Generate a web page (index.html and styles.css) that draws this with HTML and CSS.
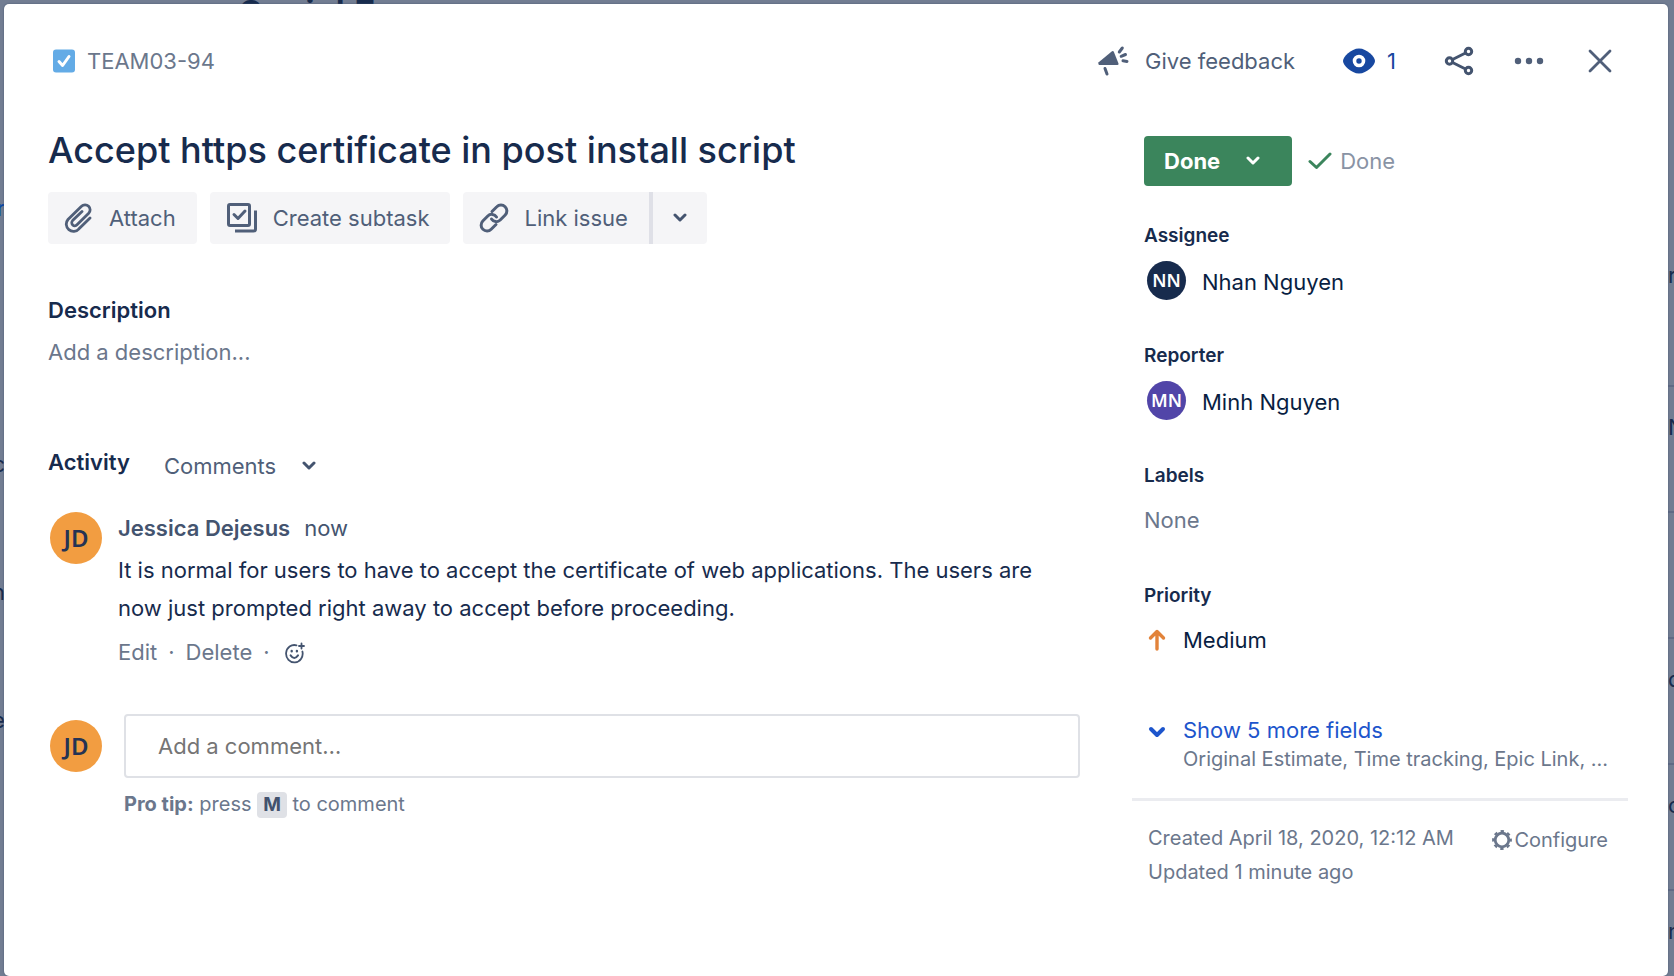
FILE: index.html
```html
<!DOCTYPE html>
<html lang="en">
<head>
<meta charset="utf-8">
<title>TEAM03-94</title>
<link rel="stylesheet" href="styles.css">
</head>
<body>
<div class="board" aria-hidden="true">
  <span class="board-title">Social F</span>
  <div class="board-left"><span class="board-link">r</span><span></span><span>c</span><span>n</span><span>e</span></div>
  <div class="board-right"><span>r-</span><span>N</span><span></span><span>d</span><span>or</span><span>n</span></div>
</div>
<main class="modal" role="dialog" aria-labelledby="issue-title">
  <header class="topbar">
    <a class="issue-key" href="#">
      <svg width="22" height="24" viewBox="0 0 22 24"><rect y="0.5" width="22" height="23" rx="3" fill="#63abe6"/><path d="M6 12.5l3.600 4 6.400-9" fill="none" stroke="#fff" stroke-width="3" stroke-linecap="round" stroke-linejoin="round"/></svg>
      TEAM03-94
    </a>
    <div class="top-actions">
      <button class="top-btn feedback" type="button">
        <svg width="32" height="32" viewBox="0 0 32 32"><path d="M1.700 17.300L15 6.200q1.200-.8 1.800.5l4.700 11.800q.3 1.500-1.200 1.500H2.200q-1.600-.4-.5-2.700z" fill="#505f79"/><path d="M8 23.500l2 5.500M22.300 7l3-4M24.200 11.300l4.300-1.800M26 15.800l4 .6" fill="none" stroke="#505f79" stroke-width="3" stroke-linecap="round"/></svg>
        Give feedback
      </button>
      <button class="top-btn watch" type="button">
        <svg width="32" height="26" viewBox="0 0 32 26"><path d="M16 0.500C24 .5 32 9 32 13S24 25.500 16 25.500 0 17 0 13 8 .5 16 .5z" fill="#1848a0"/><circle cx="16" cy="13" r="4.500" fill="none" stroke="#fff" stroke-width="3.600"/></svg>
        1
      </button>
      <button class="top-btn" type="button" aria-label="Share">
        <svg width="30" height="30" viewBox="0 0 30 30" fill="none" stroke="#44546f" stroke-width="3"><circle cx="5.500" cy="15" r="3.200"/><circle cx="24.500" cy="5.500" r="3.200"/><circle cx="24.500" cy="24.500" r="3.200"/><path d="M8.500 13.500l13-6.500M8.500 16.500l13 6.500"/></svg>
      </button>
      <button class="top-btn" type="button" aria-label="Actions">
        <svg width="30" height="8" viewBox="0 0 30 8" fill="#505f79"><circle cx="4" cy="4" r="3.200"/><circle cx="15" cy="4" r="3.200"/><circle cx="26" cy="4" r="3.200"/></svg>
      </button>
      <button class="top-btn close" type="button" aria-label="Close">
        <svg width="26" height="26" viewBox="0 0 26 26" fill="none" stroke="#505f79" stroke-width="2.800" stroke-linecap="round"><path d="M3 3l20 20M23 3L3 23"/></svg>
      </button>
    </div>
  </header>

  <div class="columns">
    <section class="content">
      <h1 class="title" id="issue-title">Accept https certificate in post install script</h1>
      <div class="tools">
        <button class="tool" type="button">
          <svg width="30" height="30" viewBox="0 0 30 30" fill="none" stroke="#505f79" stroke-width="2.800" stroke-linecap="round"><path d="M26 15L15 25.800A7 7 0 0 1 4 16.500L17.500 3.300a5 5 0 0 1 7.200 7L13 21.800a3 3 0 0 1-4.400-4.200L18 8.500"/></svg>
          Attach
        </button>
        <button class="tool" type="button">
          <svg width="32" height="32" viewBox="0 0 32 32" fill="none" stroke="#505f79" stroke-width="3" stroke-linejoin="round"><rect x="2.500" y="2.500" width="21" height="21" rx="1.500"/><path d="M8 12.500l4 4 7-7.500" stroke-linecap="round"/><path d="M29.500 8.500V27q0 2-2 2H9"/></svg>
          Create subtask
        </button>
        <div class="split">
          <button class="tool" type="button">
            <svg width="30" height="30" viewBox="0 0 30 30" fill="none" stroke="#505f79" stroke-width="3" stroke-linecap="round"><path d="M13 8.500l4.800-4.700a5.800 5.800 0 0 1 8.400 8.200l-5 5a5.600 5.600 0 0 1-8.700-1"/><path d="M17 21.500l-4.800 4.700A5.800 5.800 0 0 1 3.800 18l5-5a5.600 5.600 0 0 1 8.700 1"/></svg>
            Link issue
          </button>
          <button class="tool tool-more" type="button" aria-label="More link options">
            <svg width="14" height="10" viewBox="0 0 14 10" fill="none" stroke="#44546f" stroke-width="3" stroke-linecap="round" stroke-linejoin="round"><path d="M2 2l5 5 5-5"/></svg>
          </button>
        </div>
      </div>

      <h2 class="heading">Description</h2>
      <p class="placeholder">Add a description...</p>

      <div class="activity">
        <h2 class="heading">Activity</h2>
        <button class="filter" type="button">Comments
          <svg width="14" height="10" viewBox="0 0 14 10" fill="none" stroke="#44546f" stroke-width="3" stroke-linecap="round" stroke-linejoin="round"><path d="M2 2l5 5 5-5"/></svg>
        </button>
      </div>

      <article class="comment">
        <span class="avatar avatar-large">JD</span>
        <div class="comment-main">
          <p class="byline"><strong>Jessica Dejesus</strong><span>now</span></p>
          <p class="comment-text">It is normal for users to have to accept the certificate of web applications. The users are now just prompted right away to accept before proceeding.</p>
          <div class="comment-actions">
            <button type="button">Edit</button><span>·</span><button type="button">Delete</button><span>·</span>
            <button class="react" type="button" aria-label="Add reaction">
              <svg width="20" height="22" viewBox="0 0 20 22" fill="none" stroke="#44546f" stroke-width="1.800" stroke-linecap="round"><path d="M11.500 3.300A8.300 8.700 0 1 0 17.400 9.500"/><path d="M5.600 13.300q3.700 5.200 7.400 0" stroke-width="2"/><path d="M16.500 1.500v5M14 4h5"/><path d="M6.700 9v.2M11.900 9v.2" stroke-width="2.400"/></svg>
            </button>
          </div>
        </div>
      </article>

      <div class="composer">
        <span class="avatar avatar-large">JD</span>
        <div class="composer-main">
          <input class="comment-input" type="text" placeholder="Add a comment…" aria-label="Add a comment">
          <p class="tip"><strong>Pro tip:</strong> press <kbd>M</kbd> to comment</p>
        </div>
      </div>
    </section>

    <aside class="details">
      <div class="status-row">
        <button class="status" type="button">Done
          <svg width="14" height="10" viewBox="0 0 14 10" fill="none" stroke="#fff" stroke-width="3" stroke-linecap="round" stroke-linejoin="round"><path d="M2 2l5 5 5-5"/></svg>
        </button>
        <span class="resolution">
          <svg width="24" height="18" viewBox="0 0 24 18" fill="none" stroke="#3b855c" stroke-width="3" stroke-linecap="round" stroke-linejoin="round"><path d="M2 9.500l6.500 6L22 2"/></svg>
          Done
        </span>
      </div>
      <dl class="fields">
        <div class="field"><dt>Assignee</dt><dd class="person"><span class="avatar avatar-navy">NN</span><span class="name">Nhan Nguyen</span></dd></div>
        <div class="field"><dt>Reporter</dt><dd class="person"><span class="avatar avatar-purple">MN</span><span class="name">Minh Nguyen</span></dd></div>
        <div class="field"><dt>Labels</dt><dd class="empty">None</dd></div>
        <div class="field"><dt>Priority</dt><dd class="priority"><svg width="18" height="22" viewBox="0 0 18 22" fill="none" stroke="#e2833a" stroke-width="3.400" stroke-linecap="round" stroke-linejoin="round"><path d="M9 20V2.500M2.500 9L9 2.500 15.500 9"/></svg>Medium</dd></div>
      </dl>
      <button class="show-more" type="button">
        <svg width="18" height="12" viewBox="0 0 18 12" fill="none" stroke="#1d55cc" stroke-width="4" stroke-linecap="round" stroke-linejoin="round"><path d="M3 3l6 6 6-6"/></svg>
        <span class="more-text"><span class="more-title">Show 5 more fields</span><span class="more-list">Original Estimate, Time tracking, Epic Link, ...</span></span>
      </button>
      <footer class="meta">
        <div><p>Created April 18, 2020, 12:12 AM</p><p>Updated 1 minute ago</p></div>
        <button class="configure" type="button">
          <svg width="20" height="20" viewBox="0 0 20 20" fill="none" stroke="#6b778c"><circle cx="10" cy="10" r="6.800" stroke-width="2.800"/><circle cx="10" cy="10" r="8.800" stroke-width="2.200" stroke-dasharray="3.400 3.512" stroke-dashoffset="1.700"/></svg>Configure
        </button>
      </footer>
    </aside>
  </div>
</main>
</body>
</html>
```
FILE: styles.css
```css
* { box-sizing: border-box; }
body {
  margin: 0;
  font-family: Inter, "Liberation Sans", sans-serif;
  font-size: 22px;
  line-height: 28px;
  color: #172b4d;
  background: #727d92;
  min-height: 100vh;
  overflow: hidden;
}
h1, h2, p, dl, dd { margin: 0; }
button { font: inherit; color: inherit; background: none; border: 0; padding: 0; cursor: pointer; }
svg { flex: none; display: block; }

/* Dimmed board behind the dialog */
.board { position: absolute; inset: 0; overflow: hidden; }
.board-title { position: absolute; left: 239px; top: -1px; font-size: 36px; font-weight: 600; }
.board-left, .board-right { position: absolute; display: grid; }
.board-left { left: -8px; top: 194px; width: 13px; grid-auto-rows: 128px; justify-items: end; }
.board-link { color: #0747a6; }
.board-right { right: -18px; top: 261px; width: 24px; grid-auto-rows: 126px; }
.board-right span { border-bottom: 2px solid #5f6a85; }
.board-right span + span { padding-top: 26px; }

.modal {
  position: relative;
  margin: 4px 6px 0 4px;
  min-height: calc(100vh - 4px);
  padding: 31px 40px 40px 44px;
  background: #fff;
  border-radius: 5px;
  box-shadow: 0 0 2px #44546f;
}
.topbar { display: flex; justify-content: space-between; align-items: center; height: 52px; padding: 0 15px 0 5px; }
.issue-key { display: flex; align-items: center; gap: 12px; color: #6b778c; text-decoration: none; }
.top-actions { display: flex; align-items: center; gap: 40px; color: #505f79; }
.top-btn { display: flex; align-items: center; }
.feedback { gap: 16px; margin-right: 8px; }
.watch { gap: 12px; color: #1848a0; margin-right: 8px; }
.close { margin-left: 3px; }

.columns { display: grid; grid-template-columns: minmax(0, 1fr) 496px; gap: 52px; }
.content { padding-top: 39px; }
.title { font-size: 36px; line-height: 48px; font-weight: 500; }
.tools { display: flex; gap: 13px; margin-top: 18px; color: #505f79; }
.tool { display: flex; align-items: center; gap: 15px; height: 52px; padding: 0 21px 0 16px; background: #f5f5f7; border-radius: 4px; }
.split { display: flex; }
.split .tool:first-child { border-radius: 4px 0 0 4px; }
.split .tool-more { border-left: 4px solid #dfe0e7; border-radius: 0 4px 4px 0; padding: 0 20px; }
.heading { font-size: 22px; line-height: 28px; font-weight: 600; }
.content > .heading { margin-top: 52px; }
.placeholder { margin-top: 14px; color: #6b778c; }
.activity { display: flex; gap: 34px; margin-top: 82px; }
.filter { display: flex; align-items: center; gap: 26px; padding-top: 4px; color: #505f79; }
.avatar { display: flex; flex: none; align-items: center; justify-content: center; width: 39px; height: 39px; border-radius: 50%; color: #fff; font: 600 18px/20px "Noto Sans", sans-serif; }
.avatar-large { width: 52px; height: 52px; background: #f29d41; color: #253354; font-size: 24px; }
.avatar-navy { background: #172b4d; }
.avatar-purple { background: #5145a8; }
.comment { display: flex; gap: 16px; padding-left: 2px; margin-top: 32px; }
.byline { display: flex; gap: 14px; margin-top: 2px; color: #44546f; }
.byline strong { font-weight: 600; }
.comment-text { margin-top: 9px; line-height: 38px; }
.comment-actions { display: flex; gap: 11px; margin-top: 11px; color: #6b778c; }
.react { padding: 2px 0 0 4px; }
.composer { display: flex; gap: 22px; padding-left: 2px; margin-top: 48px; }
.composer .avatar { margin-top: 6px; }
.composer-main { flex: 1; }
.comment-input { display: block; width: 100%; height: 64px; padding: 0 32px; border: 2px solid #dfe1e6; border-radius: 4px; font: inherit; color: inherit; background: #fff; }
.comment-input::placeholder { color: #757575; opacity: 1; }
.tip { margin-top: 12px; font-size: 20px; color: #6b778c; }
.tip kbd { display: inline-block; padding: 0 6px; line-height: 26px; border-radius: 4px; background: #dfe1e6; color: #42526e; font-family: inherit; font-size: 19px; font-weight: 700; }

.details { padding-top: 49px; }
.status-row { display: flex; align-items: center; gap: 16px; padding-left: 12px; }
.status { display: flex; align-items: center; gap: 26px; height: 50px; padding: 0 32px 0 20px; border-radius: 4px; background: #3b855c; color: #fff; font-weight: 700; }
.resolution { display: flex; align-items: center; gap: 8px; color: #8993a4; }
.fields { display: grid; grid-auto-rows: 120px; padding: 37px 0 0 12px; }
.field dt { font-size: 19px; line-height: 26px; font-weight: 600; }
.field dd { display: flex; align-items: center; height: 40px; margin-top: 11px; color: #091e42; }
.field .person { gap: 16px; padding-left: 3px; }
.field .name { padding-top: 4px; }
.field .priority { gap: 17px; padding-left: 4px; }
.field .empty { color: #6b778c; }
.show-more { display: flex; align-items: flex-start; gap: 17px; padding: 12px 0 0 16px; text-align: left; }
.show-more svg { margin-top: 11px; }
.more-title { display: block; line-height: 30px; color: #1d55cc; }
.more-list { display: block; font-size: 20px; line-height: 28px; color: #6b778c; }
.meta { display: flex; justify-content: space-between; margin-top: 25px; padding: 20px 20px 0 16px; border-top: 3px solid #ebecf0; font-size: 20px; line-height: 34px; color: #6b778c; }
.configure { display: flex; align-items: center; gap: 2px; height: 38px; }
```
